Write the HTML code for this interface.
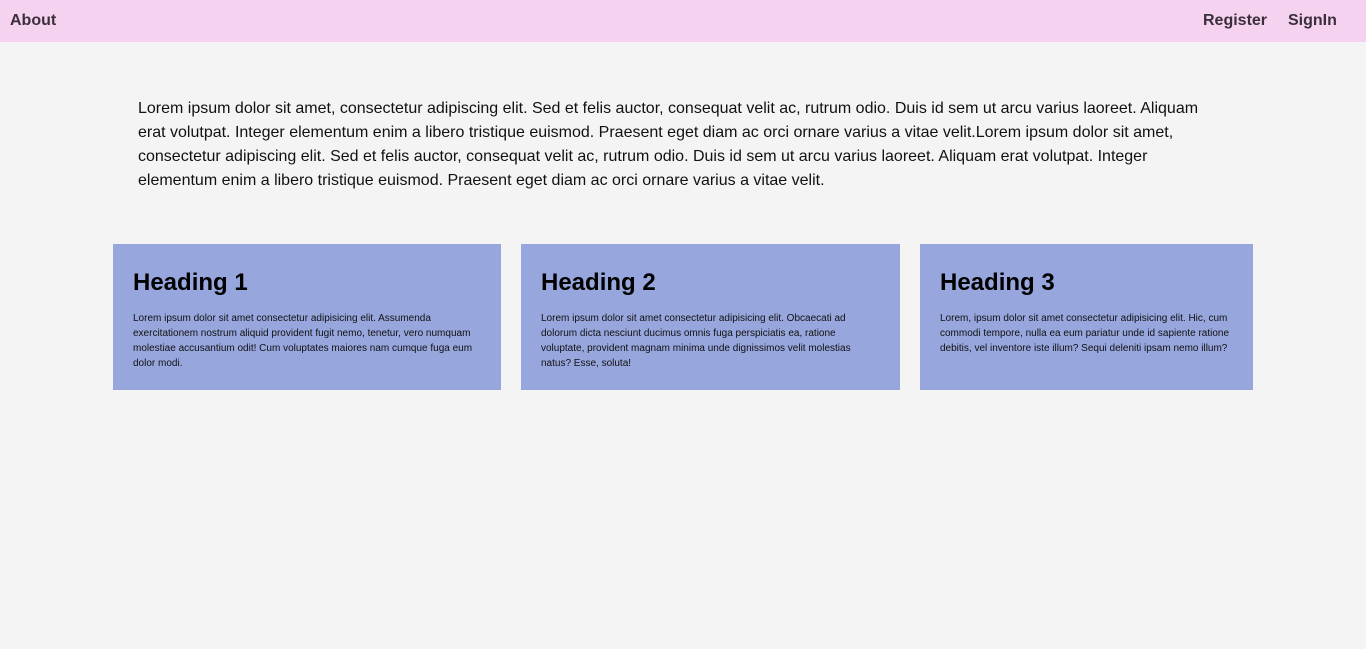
<!DOCTYPE html>
<html><head><meta charset="utf-8"><style>
*{margin:0;padding:0;box-sizing:border-box}
body{background:#f4f4f4;font-family:"Liberation Sans",Arial,sans-serif;width:1366px;height:649px;overflow:hidden}
nav{height:42px;background:#f5d2ef;position:relative;color:#3b2f3b;font-weight:bold;font-size:16px}
nav span{position:absolute;top:12px}
.intro{position:absolute;left:138px;top:97px;width:1090px;font-size:16px;line-height:24px;color:#111}
.card{position:absolute;top:244px;height:146px;background:#97a6dd;padding:25px 20px 0 20px;color:#000}
.card h2{font-size:24px;line-height:28px;margin-bottom:14px}
.card p{font-size:10px;line-height:15px;color:#111}
</style></head><body>
<nav><span style="left:10px">About</span><span style="left:1203px">Register</span><span style="left:1288px">SignIn</span></nav>
<p class="intro">Lorem ipsum dolor sit amet, consectetur adipiscing elit. Sed et felis auctor, consequat velit ac, rutrum odio. Duis id sem ut arcu varius laoreet. Aliquam erat volutpat. Integer elementum enim a libero tristique euismod. Praesent eget diam ac orci ornare varius a vitae velit.Lorem ipsum dolor sit amet, consectetur adipiscing elit. Sed et felis auctor, consequat velit ac, rutrum odio. Duis id sem ut arcu varius laoreet. Aliquam erat volutpat. Integer elementum enim a libero tristique euismod. Praesent eget diam ac orci ornare varius a vitae velit.</p>
<div class="card" style="left:113px;width:388px"><h2>Heading 1</h2><p>Lorem ipsum dolor sit amet consectetur adipisicing elit. Assumenda exercitationem nostrum aliquid provident fugit nemo, tenetur, vero numquam molestiae accusantium odit! Cum voluptates maiores nam cumque fuga eum dolor modi.</p></div>
<div class="card" style="left:521px;width:379px"><h2>Heading 2</h2><p>Lorem ipsum dolor sit amet consectetur adipisicing elit. Obcaecati ad dolorum dicta nesciunt ducimus omnis fuga perspiciatis ea, ratione voluptate, provident magnam minima unde dignissimos velit molestias natus? Esse, soluta!</p></div>
<div class="card" style="left:920px;width:333px"><h2>Heading 3</h2><p>Lorem, ipsum dolor sit amet consectetur adipisicing elit. Hic, cum commodi tempore, nulla ea eum pariatur unde id sapiente ratione debitis, vel inventore iste illum? Sequi deleniti ipsam nemo illum?</p></div>
</body></html>
